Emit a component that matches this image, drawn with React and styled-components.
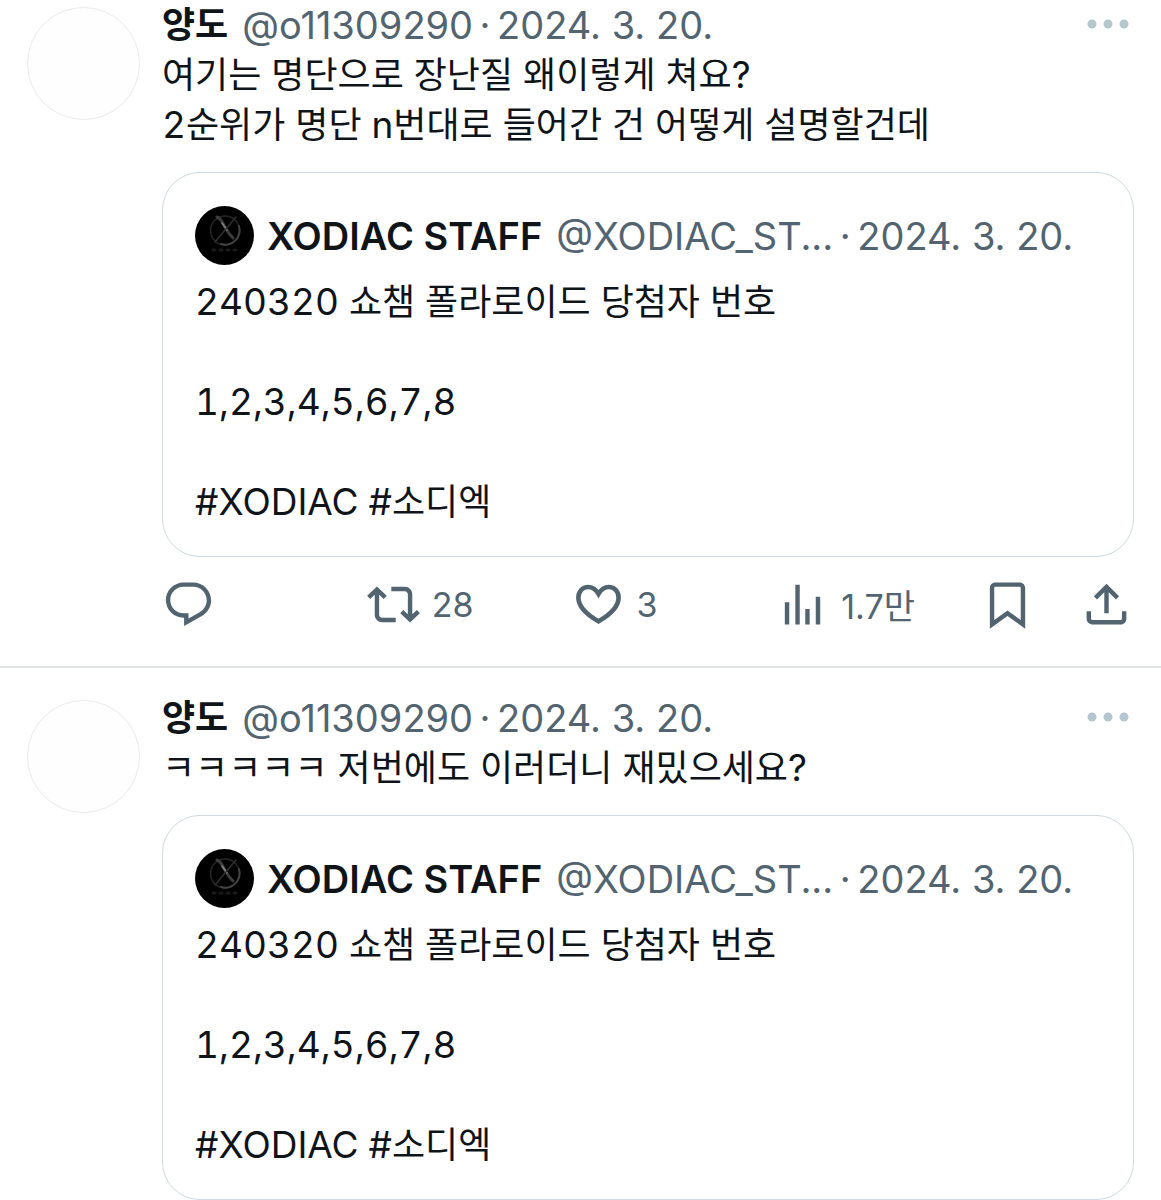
import styled, { createGlobalStyle } from "styled-components";

const GlobalStyle = createGlobalStyle`
  * {
    box-sizing: border-box;
  }

  body {
    margin: 0;
    background-color: #fff;
    color: #0f1419;
    font-family: Inter, "Noto Sans CJK KR", sans-serif;
    font-size: 36px;
    line-height: 50px;
  }
`;

const Post = styled.article`
  display: flex;
  gap: 22px;
  padding: ${(props) => (props.$first ? "0" : "25px")} 27px 0;
`;

const Avatar = styled.div`
  flex: none;
  width: 113px;
  height: 113px;
  margin-top: 7px;
  border: 1px solid #e9ebec;
  border-radius: 50%;
  background-color: #fefefe;
`;

const Content = styled.div`
  flex: 1;
  min-width: 0;
`;

const Header = styled.header`
  display: flex;
  align-items: center;
  height: 50px;
  font-size: 38px;
  line-height: 48px;
  white-space: nowrap;
`;

const Name = styled.span`
  font-size: ${(props) => (props.$korean ? "36px" : "38px")};
  font-weight: 600;
  margin-right: 14px;
`;

const Meta = styled.span`
  color: #536471;
`;

const Dot = styled.span`
  color: #536471;
  width: 24px;
  text-align: center;
`;

const MoreButton = styled.button`
  display: flex;
  margin-left: auto;
  padding: 0 5px 2px 0;
  border: 0;
  background: none;
  color: #b5c6ce;
  cursor: pointer;
`;

const Text = styled.p`
  margin: 0;
  font-variant-numeric: tabular-nums;
  white-space: pre-line;
`;

const Latin = styled.span`
  font-size: 37px;
  line-height: 1;
`;

const Quote = styled.section`
  margin-top: 22px;
  padding: 33px 32px 29px;
  border: 1px solid #cfd9de;
  border-radius: 38px;
`;

const QuoteHeader = styled(Header)`
  height: 59px;
  margin-bottom: 12px;
`;

const QuoteAvatar = styled.svg`
  flex: none;
  width: 59px;
  height: 59px;
  margin-right: 13px;
`;

const Actions = styled.div`
  display: grid;
  grid-template-columns: repeat(4, 1fr) 99px 54px;
  margin-top: 21px;
`;

const ActionButton = styled.button`
  display: flex;
  align-items: center;
  gap: 12px;
  height: 53px;
  padding: 0;
  border: 0;
  background: none;
  color: #536471;
  font-family: inherit;
  font-size: 34px;
  white-space: nowrap;
  cursor: pointer;
`;

const Icon = styled.svg`
  flex: none;
  width: 53px;
  height: 53px;
  fill: currentColor;
`;

const Divider = styled.hr`
  height: 2px;
  margin: 35px 0 0;
  border: 0;
  background-color: #e1e4e6;
`;

const icons = {
  reply: (
    <path d="M1.751 10c0-4.42 3.584-8 8.005-8h4.366c4.49 0 8.129 3.64 8.129 8.13 0 2.96-1.607 5.68-4.196 7.11l-8.054 4.46v-3.69h-.067c-4.49.1-8.183-3.51-8.183-8.01zm8.005-6c-3.317 0-6.005 2.69-6.005 6 0 3.37 2.77 6.08 6.138 6.01l.351-.01h1.761v2.3l5.087-2.81c1.951-1.08 3.163-3.13 3.163-5.36 0-3.39-2.744-6.13-6.129-6.13H9.756z" />
  ),
  repost: (
    <path d="M4.5 3.88l4.432 4.14-1.364 1.46L5.5 7.55V16.6c0 .77.63 1.4 1.4 1.4H13v2H6.9c-1.88 0-3.4-1.52-3.4-3.4V7.55L1.432 9.48.068 8.02 4.5 3.88zM17.1 6H11V4h6.1c1.88 0 3.4 1.52 3.4 3.4v9.05l2.068-1.93 1.364 1.46-4.432 4.14-4.432-4.14 1.364-1.46 2.068 1.93V7.4c0-.77-.63-1.4-1.4-1.4z" />
  ),
  like: (
    <path
      d="M12 7.2C10.7 5 9 4.1 7.3 4.1c-2.5 0-4.4 2-4.4 4.8 0 3.9 3.6 7.5 9.1 10.7 5.5-3.2 9.1-6.8 9.1-10.7 0-2.8-1.9-4.8-4.4-4.8-1.7 0-3.4.9-4.7 3.1z"
      fill="none"
      stroke="currentColor"
      strokeWidth="2.1"
    />
  ),
  views: (
    <path d="M8.75 21V3h2v18h-2zM18 21V8.5h2V21h-2zM4 21l.004-10h2L6 21H4zm9.248 0v-7h2v7h-2z" />
  ),
  bookmark: (
    <path d="M4 4.5C4 3.12 5.119 2 6.5 2h11C18.881 2 20 3.12 20 4.5v18.44l-8-5.71-8 5.71V4.5zM6.5 4c-.276 0-.5.22-.5.5v14.56l6-4.29 6 4.29V4.5c0-.28-.224-.5-.5-.5h-11z" />
  ),
  share: (
    <path d="M12 2.59l5.7 5.7-1.41 1.42L13 6.41V16h-2V6.41l-3.3 3.3-1.41-1.42L12 2.59zM21 15l-.02 3.51c0 1.38-1.12 2.49-2.5 2.49H5.5C4.11 21 3 19.88 3 18.5V15h2v3.5c0 .28.22.5.5.5h12.98c.28 0 .5-.22.5-.5L19 15h2z" />
  ),
};

const actions = [
  { icon: "reply", label: "답글" },
  { icon: "repost", label: "재게시", count: "28" },
  { icon: "like", label: "마음에 들어요", count: "3" },
  { icon: "views", label: "조회수", count: "1.7만" },
  { icon: "bookmark", label: "북마크" },
  { icon: "share", label: "공유" },
];

const posts = [
  {
    id: 1,
    text: "여기는 명단으로 장난질 왜이렇게 쳐요?\n2순위가 명단 n번대로 들어간 건 어떻게 설명할건데",
    showActions: true,
  },
  {
    id: 2,
    text: "ㅋㅋㅋㅋㅋ 저번에도 이러더니 재밌으세요?",
    showActions: false,
  },
];

// latin letters, digits and spaces are set a little larger than the hangul
const PostText = ({ children }) => (
  <Text>
    {children
      .split(/([\x20-\x7e]+)/)
      .map((part, i) => (i % 2 ? <Latin key={i}>{part}</Latin> : part))}
  </Text>
);

const StaffAvatar = () => (
  <QuoteAvatar viewBox="0 0 59 59" aria-hidden="true">
    <circle cx="29.5" cy="29.5" r="29.5" fill="#000" />
    <g fill="none" strokeLinecap="round">
      <circle cx="30" cy="24.5" r="14.5" stroke="#262626" strokeWidth="1.5" />
      <path d="M44 20a14.5 14.5 0 0 1-18 18" stroke="#444" strokeWidth="2" />
      <path d="M22 11c5 2 6 7 9 12s5 7 7 9" stroke="#3c3c3c" strokeWidth="3" />
      <path d="M27 17l5 7" stroke="#858585" strokeWidth="1.5" />
      <path d="M41 11L20 36" stroke="#303030" strokeWidth="1.5" />
      <path d="M18 44h24" stroke="#1a1a1a" strokeWidth="3" strokeDasharray="2 5" />
    </g>
  </QuoteAvatar>
);

const QuotedPost = () => (
  <Quote>
    <QuoteHeader>
      <StaffAvatar />
      <Name>XODIAC STAFF</Name>
      <Meta>@XODIAC_ST...</Meta>
      <Dot>·</Dot>
      <Meta>2024. 3. 20.</Meta>
    </QuoteHeader>
    <PostText>{"240320 쇼챔 폴라로이드 당첨자 번호\n\n1,2,3,4,5,6,7,8\n\n#XODIAC #소디엑"}</PostText>
  </Quote>
);

const ActionBar = () => (
  <Actions>
    {actions.map(({ icon, label, count }) => (
      <ActionButton key={icon} type="button" aria-label={label}>
        <Icon viewBox="0 0 24 24" aria-hidden="true">
          {icons[icon]}
        </Icon>
        {count && <span>{count}</span>}
      </ActionButton>
    ))}
  </Actions>
);

const App = () => {
  return (
    <>
      <GlobalStyle />
      <main>
        {posts.map((post, index) => (
          <div key={post.id}>
            <Post $first={index === 0}>
              <Avatar />
              <Content>
                <Header>
                  <Name $korean>양도</Name>
                  <Meta>@o11309290</Meta>
                  <Dot>·</Dot>
                  <Meta>2024. 3. 20.</Meta>
                  <MoreButton type="button" aria-label="더 보기">
                    <svg width="42" height="10" viewBox="0 0 42 10" fill="currentColor">
                      <circle cx="5" cy="5" r="4.5" />
                      <circle cx="21" cy="5" r="4.5" />
                      <circle cx="37" cy="5" r="4.5" />
                    </svg>
                  </MoreButton>
                </Header>
                <PostText>{post.text}</PostText>
                <QuotedPost />
                {post.showActions && <ActionBar />}
              </Content>
            </Post>
            {index < posts.length - 1 && <Divider />}
          </div>
        ))}
      </main>
    </>
  );
};

export default App;
